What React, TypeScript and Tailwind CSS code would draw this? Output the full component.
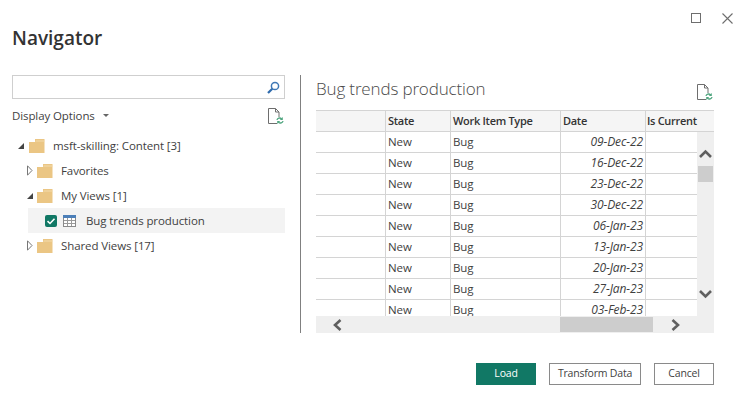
const rows = [
  "09-Dec-22",
  "16-Dec-22",
  "23-Dec-22",
  "30-Dec-22",
  "06-Jan-23",
  "13-Jan-23",
  "20-Jan-23",
  "27-Jan-23",
  "03-Feb-23",
]

function Folder() {
  return (
    <svg width="16" height="14" viewBox="0 0 16 14" className="shrink-0">
      <path d="M0 3h6V0h9.500v14H0z" fill="#ebc684" />
      <path d="M6 2.500 7 1.500h8.500v1z" fill="#f3dcae" />
    </svg>
  )
}

function Open() {
  return (
    <svg width="6" height="6" viewBox="0 0 6 6" className="shrink-0">
      <path d="M6 0v6H0z" fill="#444" />
    </svg>
  )
}

function Closed() {
  return (
    <svg width="6" height="11" viewBox="0 0 6 11" className="shrink-0">
      <path d="M.5.800 5 5.500.5 10.200z" fill="none" stroke="#777" />
    </svg>
  )
}

function DocRefresh() {
  return (
    <svg width="16" height="17" viewBox="0 0 16 17">
      <path d="M9 15.500H.5V.5H7.500L11 4v5M7.500.5V4H11" fill="none" stroke="#6e6e6e" />
      <path d="M9 12c.3-1.700 2.700-2.800 4.700-1.200M15 13c-.3 1.700-2.700 2.800-4.700 1.200" fill="none" stroke="#4fa57f" strokeWidth="1.300" />
      <path d="M14.800 9v3h-3zM9.200 16v-3h3z" fill="#4fa57f" />
    </svg>
  )
}

function TreeRow({ indent, arrow, label }: { indent: string; arrow: React.ReactNode; label: string }) {
  return (
    <div className={`flex h-[25px] items-center ${indent}`}>
      <div className="flex w-[11px] justify-start">{arrow}</div>
      <Folder />
      <span className="ml-[8px]">{label}</span>
    </div>
  )
}

export default function App() {
  return (
    <div className="flex h-[400px] w-[742px] flex-col bg-white text-[11.500px] tracking-[-0.1px] text-[#3f3f3f] [font-family:'Open_Sans',sans-serif]">
      <div className="flex h-[24px] items-start justify-end gap-[21px] pt-[13px] pr-[9px]">
        <div className="h-[10px] w-[10px] border border-[#6e6e6e]" />
        <svg width="11" height="11" viewBox="0 0 11 11">
          <path d="M.5.500l10 10M10.500.500l-10 10" stroke="#6e6e6e" strokeWidth="1.100" />
        </svg>
      </div>

      <div className="h-[51px] pt-[1px] pl-[12px] text-[19px] leading-[26px] font-semibold tracking-normal text-[#333]">Navigator</div>

      <div className="flex h-[258px]">
        <div className="ml-[12px] w-[273px]">
          <div className="flex h-[24px] items-center justify-end border border-[#cfcfcf] pr-[4px]">
            <svg width="13" height="13" viewBox="0 0 13 13">
              <circle cx="8" cy="5" r="3.600" fill="none" stroke="#3f78b5" strokeWidth="1.500" />
              <path d="M5.300 7.700 1 12" stroke="#2f6bad" strokeWidth="2.200" />
            </svg>
          </div>
          <div className="mt-[8px] flex h-[18px] items-center justify-between">
            <div className="flex items-center">
              <span>Display Options</span>
              <span className="mb-[2px] ml-[8px] h-0 w-0 border-x-[3px] border-t-[3px] border-x-transparent border-t-[#666]" />
            </div>
            <div className="mr-[1px]">
              <DocRefresh />
            </div>
          </div>
          <div className="mt-[8px]">
            <TreeRow indent="pl-[6px]" arrow={<Open />} label="msft-skilling: Content [3]" />
            <TreeRow indent="pl-[14px]" arrow={<div className="pl-[1px]"><Closed /></div>} label="Favorites" />
            <TreeRow indent="pl-[14px]" arrow={<div className="pl-[1px]"><Open /></div>} label="My Views [1]" />
            <div className="ml-[16px] flex h-[25px] items-center bg-[#f3f3f3] pl-[17px]">
              <div className="flex h-[12px] w-[12px] items-center justify-center rounded-[2px] bg-[#117865]">
                <svg width="10" height="10" viewBox="0 0 10 10">
                  <path d="M1.500 5.200 4 7.500 8.500 2.800" fill="none" stroke="white" strokeWidth="1.600" />
                </svg>
              </div>
              <svg width="13" height="12" viewBox="0 0 13 12" className="ml-[6px]">
                <rect x=".5" y=".5" width="12" height="11" fill="white" stroke="#8a8a8a" />
                <rect width="13" height="3" fill="#4c7fb8" />
                <path d="M4.500 3v8M8.500 3v8M1 5.500h11M1 8.500h11" stroke="#9a9a9a" />
              </svg>
              <span className="ml-[10px]">Bug trends production</span>
            </div>
            <TreeRow indent="pl-[14px]" arrow={<div className="pl-[1px]"><Closed /></div>} label="Shared Views [17]" />
          </div>
        </div>

        <div className="ml-[15px] w-px bg-[#808080]" />

        <div className="ml-[15px] flex w-[398px] flex-col">
          <div className="flex h-[35px] justify-between">
            <span className="text-[17px] leading-[28px] font-light tracking-[-0.15px] text-[#4a4a4a]">Bug trends production</span>
            <div className="mt-[9px] mr-[1px]">
              <DocRefresh />
            </div>
          </div>

          <div className="flex h-[22px] border-y border-[#d4d4d4] bg-[#f5f5f5] text-[11px] font-semibold tracking-[-0.3px] text-[#333]">
            <div className="w-[70px] border-r border-[#d4d4d4]" />
            <div className="flex w-[65px] items-center border-r border-[#d4d4d4] pl-[2px]">State</div>
            <div className="flex w-[110px] items-center border-r border-[#d4d4d4] pl-[2px]">Work Item Type</div>
            <div className="flex w-[85px] items-center border-r border-[#d4d4d4] pl-[2px]">Date</div>
            <div className="flex items-center pl-[1px]">Is Current</div>
          </div>

          <div className="flex h-[184px]">
            <div className="w-[381px] overflow-hidden">
              {rows.map((date) => (
                <div key={date} className="flex h-[21px] border-b border-[#d4d4d4]">
                  <div className="w-[70px] border-r border-[#d4d4d4]" />
                  <div className="flex w-[65px] items-center border-r border-[#d4d4d4] pl-[2px]">New</div>
                  <div className="flex w-[110px] items-center border-r border-[#d4d4d4] pl-[2px]">Bug</div>
                  <div className="flex w-[85px] items-center justify-end border-r border-[#d4d4d4] pr-[2px] text-[12px] italic">{date}</div>
                  <div className="flex-1" />
                </div>
              ))}
            </div>
            <div className="flex w-[17px] flex-col items-center bg-[#efefef] pt-[17px]">
              <svg width="13" height="9" viewBox="0 0 13 9">
                <path d="M1 8 6.500 2.500 12 8" fill="none" stroke="#5f5f5f" strokeWidth="2.600" />
              </svg>
              <div className="mt-[8px] h-[16px] w-[15px] bg-[#cdcdcd]" />
              <svg width="13" height="9" viewBox="0 0 13 9" className="mt-[108px]">
                <path d="M1 1l5.500 5.500L12 1" fill="none" stroke="#5f5f5f" strokeWidth="2.600" />
              </svg>
            </div>
          </div>

          <div className="flex h-[17px] items-center bg-[#efefef]">
            <svg width="10" height="12" viewBox="0 0 10 12" className="ml-[16px]">
              <path d="M8.500 1 3 6l5.500 5" fill="none" stroke="#5f5f5f" strokeWidth="2.600" />
            </svg>
            <div className="ml-[218px] h-[15px] w-[93px] bg-[#cdcdcd]" />
            <svg width="10" height="12" viewBox="0 0 10 12" className="ml-[18px]">
              <path d="M1.500 1 7 6l-5.500 5" fill="none" stroke="#5f5f5f" strokeWidth="2.600" />
            </svg>
          </div>
        </div>
      </div>

      <div className="mt-[30px] flex justify-end pr-[28px] text-[10.500px] tracking-[-0.2px]">
        <button className="h-[22px] w-[60px] bg-[#117865] text-white">Load</button>
        <button className="ml-[13px] h-[22px] w-[92px] border border-[#8a8a8a]">Transform Data</button>
        <button className="ml-[13px] h-[22px] w-[60px] border border-[#8a8a8a]">Cancel</button>
      </div>
    </div>
  )
}
